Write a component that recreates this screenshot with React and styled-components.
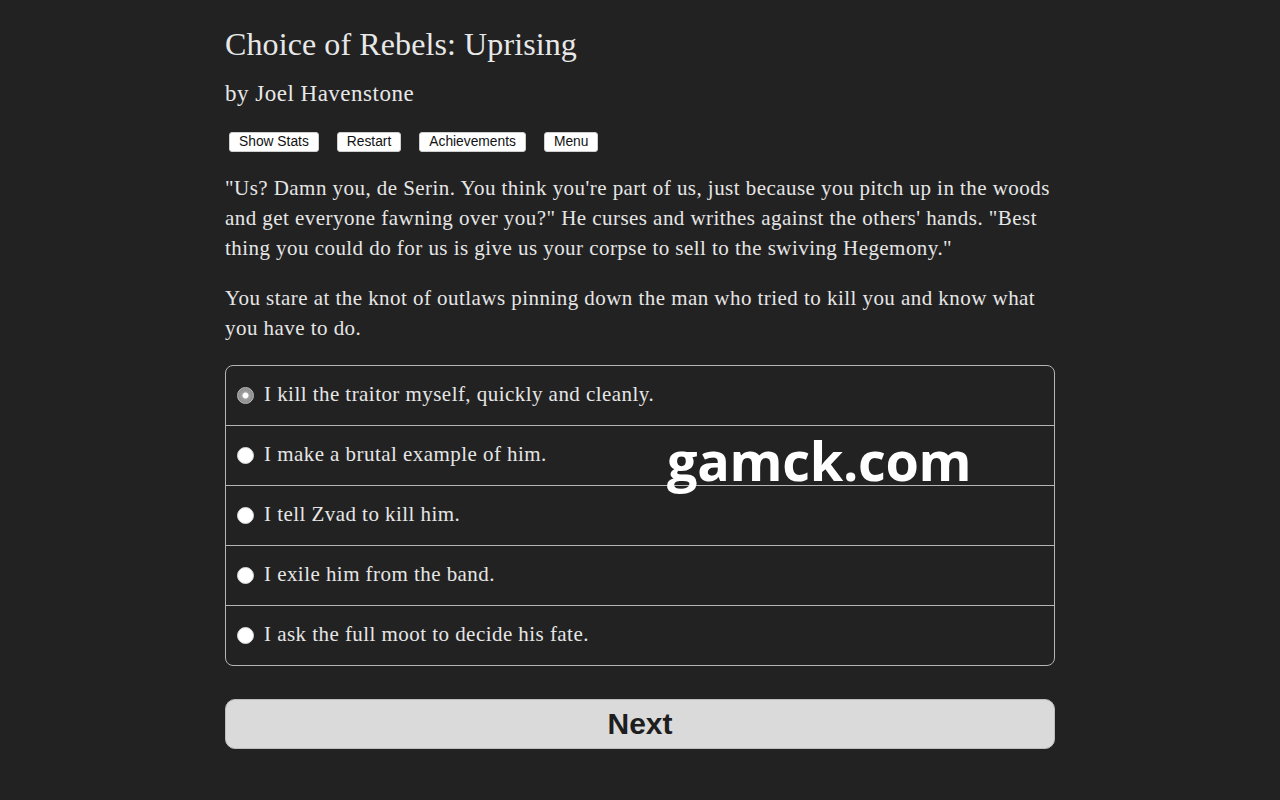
import React, { useState } from "react";
import styled, { createGlobalStyle } from "styled-components";

const GlobalStyle = createGlobalStyle`
  html, body {
    margin: 0;
    padding: 0;
    background: #222222;
  }
  body {
    font-family: "Liberation Serif", "DejaVu Serif", serif;
    color: #e6e6e6;
  }
`;

const Page = styled.div`
  position: relative;
  min-height: 800px;
  background: #222222;
`;

const Column = styled.div`
  width: 830px;
  margin: 0 auto;
  padding-top: 24px;
`;

const Title = styled.h1`
  margin: 0;
  font-family: "Liberation Serif", serif;
  font-weight: normal;
  font-size: 32px;
  line-height: 40px;
  letter-spacing: 0.1px;
  color: #e8e8e8;
`;

const Author = styled.h2`
  margin: 15px 0 0;
  font-family: "Liberation Serif", serif;
  font-weight: normal;
  font-size: 23px;
  line-height: 30px;
  letter-spacing: 0.5px;
  color: #e8e8e8;
`;

const Toolbar = styled.div`
  display: flex;
  gap: 18px;
  margin: 23px 0 0 4px;
`;

const ToolButton = styled.button`
  font-family: "Liberation Sans", Arial, sans-serif;
  font-size: 13.8px;
  line-height: 16px;
  height: 20px;
  padding: 0 9px;
  background: #ffffff;
  color: #111;
  border: 1px solid #cfcfcf;
  border-radius: 3px;
  cursor: pointer;
`;

const Text = styled.p`
  margin: ${(p) => p.$top || 0}px 0 0;
  font-size: 21px;
  line-height: 30px;
  letter-spacing: 0.45px;
  color: #e6e6e6;
`;

const Choices = styled.div`
  margin-top: 22px;
  border: 1px solid #b5b5b5;
  border-radius: 8px;
  overflow: hidden;
`;

const Choice = styled.label`
  display: flex;
  align-items: center;
  height: ${(p) => (p.$first ? 59 : 60)}px;
  box-sizing: border-box;
  padding: 0 0 3px 11px;
  border-top: ${(p) => (p.$first ? "none" : "1px solid #b5b5b5")};
  font-size: 21px;
  letter-spacing: 0.45px;
  color: #e6e6e6;
  cursor: pointer;
`;

const Radio = styled.span`
  width: 17px;
  height: 17px;
  border-radius: 50%;
  margin-right: 10px;
  margin-top: 3px;
  flex-shrink: 0;
  background: ${(p) =>
    p.$checked
      ? "radial-gradient(circle, #ffffff 0 2.5px, #a0a0a0 3.5px, #7d7d7d 100%)"
      : "#ffffff"};
  border: 1px solid ${(p) => (p.$checked ? "#bdbdbd" : "#d8d8d8")};
  box-sizing: border-box;
`;

const NextButton = styled.button`
  display: block;
  width: 100%;
  height: 50px;
  margin-top: 33px;
  background: #dadada;
  border: 1px solid #bcbcbc;
  border-radius: 10px;
  font-family: "Liberation Sans", Arial, sans-serif;
  font-weight: bold;
  font-size: 30px;
  color: #1e1e1e;
  cursor: pointer;
`;

const Watermark = styled.div`
  position: absolute;
  left: 667px;
  top: 425px;
  font-family: "Open Sans", "DejaVu Sans", sans-serif;
  font-weight: 700;
  font-size: 54px;
  line-height: 70px;
  color: #ffffff;
  letter-spacing: -0.3px;
`;

const options = [
  "I kill the traitor myself, quickly and cleanly.",
  "I make a brutal example of him.",
  "I tell Zvad to kill him.",
  "I exile him from the band.",
  "I ask the full moot to decide his fate.",
];

export default function App() {
  const [selected, setSelected] = useState(0);
  return (
    <Page>
      <GlobalStyle />
      <Column>
        <Title>Choice of Rebels: Uprising</Title>
        <Author>by Joel Havenstone</Author>
        <Toolbar>
          <ToolButton>Show Stats</ToolButton>
          <ToolButton>Restart</ToolButton>
          <ToolButton>Achievements</ToolButton>
          <ToolButton>Menu</ToolButton>
        </Toolbar>
        <Text $top={21}>
          "Us? Damn you, de Serin. You think you're part of us, just because you pitch up in the woods
          and get everyone fawning over you?" He curses and writhes against the others' hands. "Best
          thing you could do for us is give us your corpse to sell to the swiving Hegemony."
        </Text>
        <Text $top={20}>
          You stare at the knot of outlaws pinning down the man who tried to kill you and know what
          you have to do.
        </Text>
        <Choices>
          {options.map((o, i) => (
            <Choice key={o} $first={i === 0} onClick={() => setSelected(i)}>
              <Radio $checked={selected === i} />
              {o}
            </Choice>
          ))}
        </Choices>
        <NextButton>Next</NextButton>
      </Column>
      <Watermark>gamck.com</Watermark>
    </Page>
  );
}
